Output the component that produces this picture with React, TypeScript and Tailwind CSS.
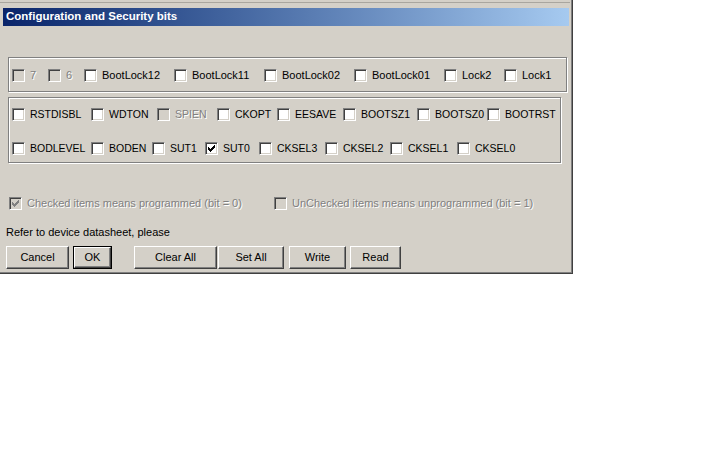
import React from "react";

type Bit = { label: string; w?: number; checked?: boolean; disabled?: boolean };

const lockRow: Bit[] = [
  { label: "7", w: 36, disabled: true },
  { label: "6", w: 36, disabled: true },
  { label: "BootLock12", w: 90 },
  { label: "BootLock11", w: 90 },
  { label: "BootLock02", w: 90 },
  { label: "BootLock01", w: 90 },
  { label: "Lock2", w: 60 },
  { label: "Lock1" },
];

const fuseHigh: Bit[] = [
  { label: "RSTDISBL", w: 79 },
  { label: "WDTON", w: 66 },
  { label: "SPIEN", w: 60, disabled: true },
  { label: "CKOPT", w: 60 },
  { label: "EESAVE", w: 66 },
  { label: "BOOTSZ1", w: 74 },
  { label: "BOOTSZ0", w: 70 },
  { label: "BOOTRST" },
];

const fuseLow: Bit[] = [
  { label: "BODLEVEL", w: 79 },
  { label: "BODEN", w: 61 },
  { label: "SUT1", w: 53 },
  { label: "SUT0", w: 54, checked: true },
  { label: "CKSEL3", w: 66 },
  { label: "CKSEL2", w: 65 },
  { label: "CKSEL1", w: 67 },
  { label: "CKSEL0" },
];

// classic 7x7 pixel tick
const Tick = ({ color }: { color: string }) => (
  <svg width="7" height="7" viewBox="0 0 7 7" shapeRendering="crispEdges" fill={color}>
    <rect x="6" y="0" width="1" height="1" />
    <rect x="5" y="1" width="2" height="1" />
    <rect x="0" y="2" width="1" height="1" />
    <rect x="4" y="2" width="3" height="1" />
    <rect x="0" y="3" width="2" height="1" />
    <rect x="3" y="3" width="3" height="1" />
    <rect x="0" y="4" width="5" height="1" />
    <rect x="1" y="5" width="3" height="1" />
    <rect x="2" y="6" width="1" height="1" />
  </svg>
);

const Box = ({ checked, disabled }: { checked?: boolean; disabled?: boolean }) => (
  <span
    className={`flex h-[13px] w-[13px] shrink-0 items-center justify-center border border-t-[#808080] border-l-[#808080] border-b-white border-r-white shadow-[inset_1px_1px_0_#404040,inset_-1px_-1px_0_#d4d0c8] ${
      disabled ? "bg-[#d4d0c8]" : "bg-white"
    }`}
  >
    {checked && <Tick color={disabled ? "#808080" : "#000"} />}
  </span>
);

const Check = ({ label, w, checked, disabled }: Bit) => (
  <div className="flex shrink-0 items-center" style={w ? { width: w } : undefined}>
    <Box checked={checked} disabled={disabled} />
    <span
      className={`ml-[5px] whitespace-nowrap leading-[13px] ${
        disabled ? "text-[#808080] [text-shadow:1px_1px_0_#fff]" : "text-black"
      }`}
    >
      {label}
    </span>
  </div>
);

const Row = ({ bits }: { bits: Bit[] }) => (
  <div className="flex items-center">
    {bits.map((b) => (
      <Check key={b.label} {...b} />
    ))}
  </div>
);

const Btn = ({ children, w, isDefault }: { children: React.ReactNode; w: number; isDefault?: boolean }) => {
  const face = (
    <span className="flex h-full w-full items-center justify-center border border-t-white border-l-white border-b-[#404040] border-r-[#404040] bg-[#d4d0c8] shadow-[inset_-1px_-1px_0_#808080]">
      {children}
    </span>
  );
  return (
    <div className={`h-[23px] shrink-0 ${isDefault ? "border border-black" : ""}`} style={{ width: w }}>
      {face}
    </div>
  );
};

export default function App() {
  return (
    <div className="min-h-screen bg-white font-['Liberation_Sans',Arial,sans-serif] text-[11px]">
      <div className="flex h-[274px] w-[573px] flex-col border-r border-b border-[#404040] bg-[#d4d0c8] shadow-[inset_-1px_-1px_0_#808080]">
        <div className="mt-[2px] h-px w-[570px] bg-[#a9a69f]" />
        <div className="mx-[3px] mt-[5px] flex h-[18px] items-center bg-gradient-to-r from-[#0a246a] to-[#a6caf0] pl-[3px]">
          <span className="text-[11.5px] font-bold text-white">Configuration and Security bits</span>
        </div>

        <div className="ml-[8px] mt-[31px] flex h-[35px] w-[559px] items-center border border-[#808080] pl-[3px] pt-px shadow-[1px_1px_0_#fff,inset_1px_1px_0_#fff]">
          <Row bits={lockRow} />
        </div>

        <div className="ml-[8px] mt-[5px] flex h-[66px] w-[553px] flex-col gap-[21px] border border-[#808080] pl-[3px] pt-[10px] text-[10.5px] shadow-[1px_1px_0_#fff,inset_1px_1px_0_#fff]">
          <Row bits={fuseHigh} />
          <Row bits={fuseLow} />
        </div>

        <div className="ml-[9px] mt-[34px] flex items-center">
          <Check label="Checked items means programmed (bit = 0)" w={265} checked disabled />
          <Check label="UnChecked items means unprogrammed (bit = 1)" disabled />
        </div>

        <div className="ml-[6px] mt-[16px] leading-[13px] text-black">Refer to device datasheet, please</div>

        <div className="ml-[6px] mt-[7px] flex items-center text-black">
          <Btn w={63}>Cancel</Btn>
          <div className="ml-[4px]">
            <Btn w={39} isDefault>
              OK
            </Btn>
          </div>
          <div className="ml-[22px]">
            <Btn w={83}>Clear All</Btn>
          </div>
          <div className="ml-[1px]">
            <Btn w={66}>Set All</Btn>
          </div>
          <div className="ml-[5px]">
            <Btn w={57}>Write</Btn>
          </div>
          <div className="ml-[4px]">
            <Btn w={51}>Read</Btn>
          </div>
        </div>
      </div>
    </div>
  );
}
